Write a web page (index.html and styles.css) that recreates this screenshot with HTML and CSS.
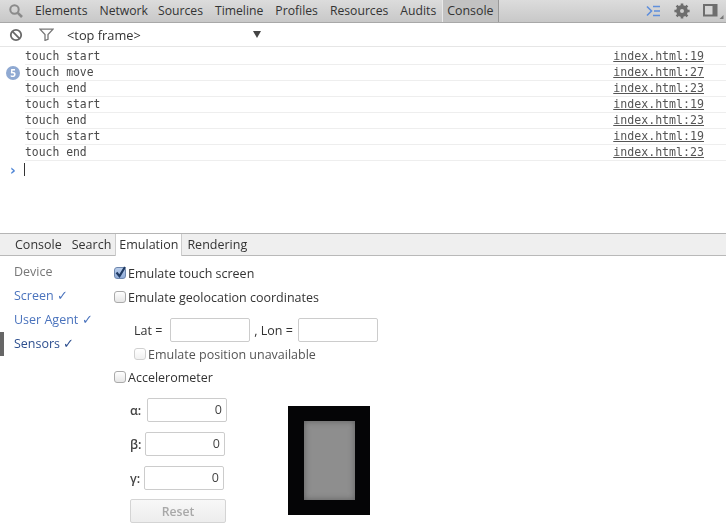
FILE: index.html
```html
<!DOCTYPE html>
<html lang="en">
<head>
<meta charset="utf-8">
<title>DevTools Emulation</title>
<link rel="stylesheet" href="styles.css">
</head>
<body>
<div class="app">
  <header class="topbar">
    <svg class="search" width="16" height="16" viewBox="0 0 16 16"><circle cx="6.5" cy="6.5" r="4.2" fill="none" stroke="#8a8a8a" stroke-width="2"/><path d="M9.8 9.8l4.2 4.2" stroke="#8a8a8a" stroke-width="2.6"/></svg>
    <nav class="panels">
      <span class="panel">Elements</span>
      <span class="panel panel-tight">Network</span>
      <span class="panel">Sources</span>
      <span class="panel">Timeline</span>
      <span class="panel">Profiles</span>
      <span class="panel">Resources</span>
      <span class="panel">Audits</span>
      <span class="panel panel-active">Console</span>
    </nav>
    <div class="top-icons">
      <svg width="15" height="12" viewBox="0 0 15 12"><path d="M1 1.5l4.5 4.5L1 10.5" fill="none" stroke="#5f8fdc" stroke-width="1.6"/><path d="M7 1.5h7M8 6h6M7 10.5h7" stroke="#5f8fdc" stroke-width="1.6"/></svg>
      <svg width="16" height="16" viewBox="0 0 16 16"><circle cx="8" cy="8" r="4.4" fill="none" stroke="#6e6e6e" stroke-width="3"/><path d="M8 .4v15.2M.4 8h15.2M2.6 2.6l10.8 10.8M13.4 2.6L2.6 13.4" stroke="#6e6e6e" stroke-width="2.6"/><circle cx="8" cy="8" r="2" fill="#cfcfcf"/></svg>
      <svg width="21" height="18" viewBox="0 0 21 18"><path d="M1 3h12.5v10.5H1z" fill="#d6d6d6" stroke="#6e6e6e" stroke-width="2"/><path d="M9.5 3h4v10.5h-4z" fill="#6e6e6e"/><path d="M20.5 13v4h-4z" fill="#777"/></svg>
    </div>
  </header>

  <div class="filterbar">
    <svg class="clear" width="14" height="14" viewBox="0 0 14 14"><circle cx="7" cy="7" r="5.2" fill="none" stroke="#6a6a6a" stroke-width="1.8"/><path d="M3.4 3.4l7.2 7.2" stroke="#6a6a6a" stroke-width="1.8"/></svg>
    <svg class="filter" width="15" height="13" viewBox="0 0 15 13"><path d="M1 1.2h13L9 6.6v4.8l-3 1V6.6z" fill="#fff" stroke="#777" stroke-width="1.3"/></svg>
    <span class="frame">&lt;top frame&gt;</span>
    <span class="caret"></span>
  </div>

  <section class="log">
    <div class="row"><span class="msg">touch start</span><a class="src">index.html:19</a></div>
    <div class="row"><span class="count">5</span><span class="msg">touch move</span><a class="src">index.html:27</a></div>
    <div class="row"><span class="msg">touch end</span><a class="src">index.html:23</a></div>
    <div class="row"><span class="msg">touch start</span><a class="src">index.html:19</a></div>
    <div class="row"><span class="msg">touch end</span><a class="src">index.html:23</a></div>
    <div class="row"><span class="msg">touch start</span><a class="src">index.html:19</a></div>
    <div class="row"><span class="msg">touch end</span><a class="src">index.html:23</a></div>
    <div class="prompt"><span class="chev">&#8250;</span><span class="cursor"></span></div>
  </section>

  <section class="drawer">
    <div class="tabs">
      <span class="tab">Console</span>
      <span class="tab">Search</span>
      <span class="tab tab-active">Emulation</span>
      <span class="tab">Rendering</span>
    </div>
    <div class="drawer-body">
      <aside class="side">
        <div class="side-item side-device">Device</div>
        <div class="side-item">Screen &#10003;</div>
        <div class="side-item">User Agent &#10003;</div>
        <div class="side-item side-selected">Sensors &#10003;</div>
      </aside>
      <div class="form">
        <label class="check-row first">
          <span class="box box-on"><svg width="13" height="13" viewBox="0 0 13 13"><path d="M2.5 6.5l3 3.6L11 1" fill="none" stroke="#1f3a63" stroke-width="2.2"/></svg></span>Emulate touch screen
        </label>
        <label class="check-row geo"><span class="box"></span>Emulate geolocation coordinates</label>
        <div class="latlon">
          <span class="lat-label">Lat =</span><span class="field"></span><span class="lon-label">, Lon =</span><span class="field"></span>
        </div>
        <label class="check-row unavailable"><span class="box box-dim"></span>Emulate position unavailable</label>
        <label class="check-row accel"><span class="box"></span>Accelerometer</label>
        <div class="sensors">
          <div class="angles">
            <div class="angle a1"><span class="greek">&alpha;:</span><span class="num">0</span></div>
            <div class="angle a2"><span class="greek">&beta;:</span><span class="num">0</span></div>
            <div class="angle a3"><span class="greek">&gamma;:</span><span class="num">0</span></div>
            <button class="reset">Reset</button>
          </div>
          <div class="device"><div class="screen"></div></div>
        </div>
      </div>
    </div>
  </section>
</div>
</body>
</html>
```
FILE: styles.css
```css
* { box-sizing: border-box; }
html, body { margin: 0; padding: 0; background: #fff; }
body { width: 726px; height: 525px; overflow: hidden; font-family: "Open Sans", "Noto Sans", sans-serif; font-size: 12px; color: #333; }
.app { width: 726px; height: 525px; overflow: hidden; filter: blur(0.4px); }

.topbar { height: 23px; display: flex; align-items: center; background: linear-gradient(#dcdcdc, #c8c8c8); border-bottom: 1px solid #a8a8a8; padding-left: 8px; }
.search { flex: none; }
.panels { display: flex; margin-left: 5px; height: 22px; align-items: center; }
.panel { padding: 0 6px; font-size: 12.2px; color: #333; line-height: 22px; }
.panel-tight { margin-right: -2px; }
.panel-active { background: #c2c2c2; border-left: 1px solid #e9e9e9; border-right: 1px solid #989898; padding: 0 4px; font-size: 12.4px; }
.top-icons { margin-left: auto; display: flex; align-items: center; gap: 13px; padding-right: 2px; }

.filterbar { height: 24px; display: flex; align-items: center; padding-left: 9px; border-bottom: 1px solid #e6e6e6; }
.filter { margin-left: 16px; }
.frame { margin-left: 13px; font-size: 12.8px; color: #333; width: 186px; }
.caret { width: 0; height: 0; border-left: 4px solid transparent; border-right: 4px solid transparent; border-top: 7px solid #444; }

.log { height: 186px; padding-top: 2px; font-family: "DejaVu Sans Mono", "Liberation Mono", monospace; font-size: 11.4px; color: #4a4a4a; }
.row { height: 16px; margin-left: 25px; display: flex; align-items: center; position: relative; border-bottom: 1px solid #eee; line-height: 15px; padding-right: 22px; }
.msg { flex: 1; }
.src { color: #555; text-decoration: underline; font-size: 11.6px; }
.count { position: absolute; left: -19px; top: 1px; width: 14px; height: 14px; border-radius: 50%; background: #8fa9d2; color: #fff; font-size: 10px; font-weight: bold; line-height: 14px; text-align: center; font-family: "Open Sans", sans-serif; }
.prompt { height: 17px; padding-left: 10px; display: flex; align-items: center; }
.chev { width: 14px; color: #4f86d6; font-size: 14px; font-weight: bold; line-height: 14px; font-family: "DejaVu Sans", sans-serif; }
.cursor { width: 1px; height: 13px; background: #333; }

.drawer { border-top: 1px solid #b5b5b5; }
.tabs { height: 22px; display: flex; align-items: stretch; background: #efefef; border-bottom: 1px solid #b9b9b9; padding-left: 10px; }
.tab { padding: 0 5px; line-height: 22px; font-size: 12.5px; color: #333; }
.tab-active { background: #fff; border-left: 1px solid #ccc; border-right: 1px solid #ccc; height: 22px; margin: 0 0 0 -1px; padding: 0 3px; }

.drawer-body { display: flex; height: 270px; }
.side { width: 112px; flex: none; padding-top: 4px; }
.side-item { height: 24px; line-height: 24px; padding-left: 14px; color: #4a73bd; font-size: 12.5px; }
.side-device { color: #777; }
.side-selected { color: #2d4f8f; border-left: 4px solid #666; padding-left: 10px; }

.form { flex: 1; padding-left: 2px; }
.check-row { display: flex; align-items: center; height: 18px; font-size: 12.5px; color: #333; }
.first { margin-top: 8px; }
.geo { margin-top: 6px; }
.box { width: 12px; height: 12px; border: 1px solid #aaa; border-radius: 3px; background: linear-gradient(#fff, #e6e6e6); margin-right: 2px; position: relative; flex: none; }
.box-on { background: linear-gradient(#b9cdea, #8fabd8); border-color: #6d86ad; }
.box-on svg { position: absolute; left: -1px; top: -2px; }
.box-dim { opacity: .55; }
.latlon { display: flex; align-items: center; height: 24px; margin: 12px 0 0 20px; font-size: 12.5px; }
.field { width: 80px; height: 24px; border: 1px solid #ccc; border-radius: 2px; background: #fff; margin-left: 6px; }
.lat-label { margin-right: 2px; }
.lon-label { margin-left: 4px; margin-right: -1px; }
.unavailable { margin: 3px 0 0 20px; color: #555; }
.accel { margin-top: 5px; }

.sensors { display: flex; margin-top: 12px; }
.angles { width: 112px; margin-left: 16px; flex: none; }
.angle { display: flex; align-items: center; height: 24px; margin-bottom: 10px; font-size: 12.5px; font-weight: 600; color: #444; }
.greek { flex: none; }
.a1 .greek { width: 17px; }
.a2 .greek { width: 15px; }
.a3 .greek { width: 14px; }
.num { width: 80px; height: 24px; border: 1px solid #ccc; border-radius: 2px; background: #fff; text-align: right; padding-right: 4px; line-height: 22px; font-size: 12.5px; font-weight: 400; color: #444; }
.reset { display: block; width: 96px; height: 24px; padding: 0; margin-top: -1px; border: 1px solid #d4d4d4; border-radius: 2px; background: linear-gradient(#f8f8f8, #ededed); color: #a8a8a8; font-family: inherit; font-size: 12.2px; font-weight: 600; }
.device { width: 82px; height: 109px; margin: 8px 0 0 46px; background: #050506; display: flex; align-items: center; justify-content: center; }
.screen { width: 51px; height: 79px; background: #8e8e8e; box-shadow: inset 0 0 6px #5c5c5c; }
```
